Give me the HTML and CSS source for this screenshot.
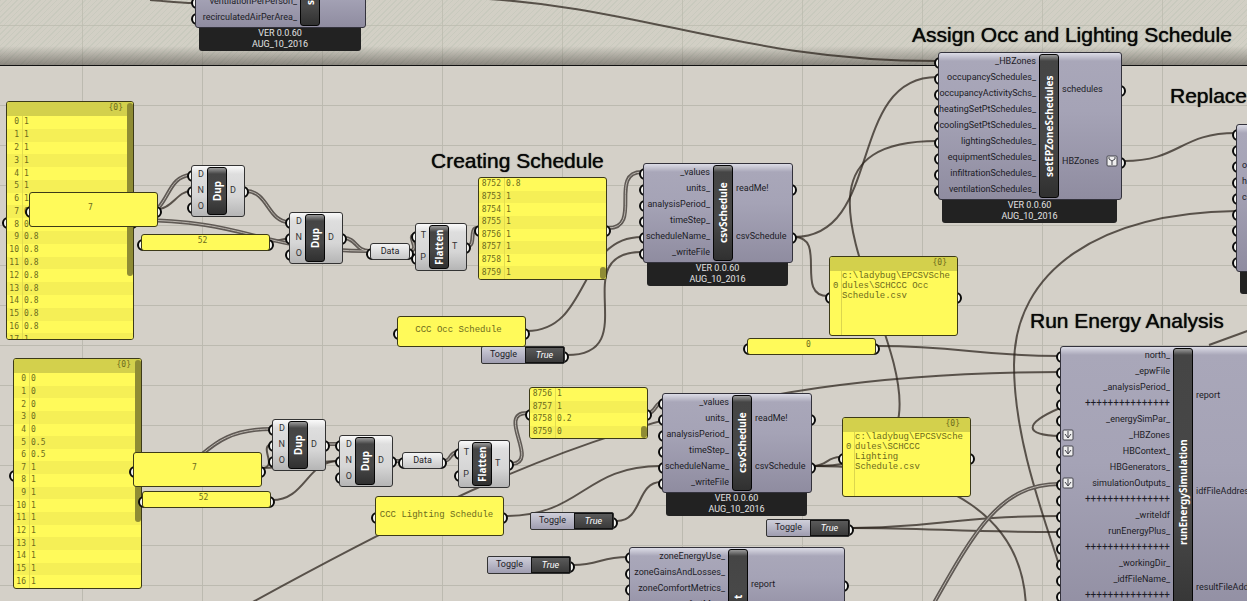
FILE: index.html
```html
<!DOCTYPE html>
<html lang="en">
<head>
<meta charset="utf-8">
<title>Schedule definition</title>
<link rel="stylesheet" href="styles.css">
</head>
<body>
<main class="canvas">
  <div class="group-area"></div>

  <svg class="wires" aria-hidden="true">
    <defs>
      <g id="double-wires">
        <path d="M159 207C170 194 172 176 191 175"/>
        <path d="M246 191C268 191 268 222 289 222"/>
        <path d="M134 220C250 220 260 251 369 251"/>
        <path d="M344 238C356 238 356 251 369 251"/>
        <path d="M411 251C420 248 406 236 415 235"/>
        <path d="M468 246C476 246 469 228 477 228"/>
        <path d="M608 228C643 228 608 172 642 172"/>
        <path d="M160 473C205 473 200 429 272 429"/>
        <path d="M327 444L339 444"/>
        <path d="M395 461L402 461"/>
        <path d="M443 461C452 461 448 454 457 452"/>
        <path d="M512 464C540 462 496 413 527 413"/>
        <path d="M649 413C655 412 656 403 662 402"/>
        <path d="M930 610C975 530 1000 484 1060 484"/>
      </g>
    </defs>
    <g class="single">
      <path d="M150 0C165 1 178 3 194 3"/>
      <path d="M470 -2C640 5 740 61 937 61"/>
      <path d="M159 209C172 208 178 191 191 191"/>
      <path d="M271 242L289 238"/>
      <path d="M527 331C591 331 577 237 642 237"/>
      <path d="M567 355C646 355 564 252 642 252"/>
      <path d="M794 237C884 237 846 77 937 77"/>
      <path d="M794 237C828 237 794 296 828 296"/>
      <path d="M813 466C1050 466 699 141 937 141"/>
      <path d="M813 466C827 466 827 457 840 457"/>
      <path d="M813 466C950 466 1025 520 1026 610"/>
      <path d="M878 346C960 346 978 356 1060 356"/>
      <path d="M240 609C520 455 700 373 1060 372"/>
      <path d="M1236 211C1100 213 1014 270 1014 365C1014 440 1045 520 1060 568"/>
      <path d="M1060 436C1024 435 1023 424 1060 408"/>
      <path d="M852 528C930 528 960 516 1060 516"/>
      <path d="M852 528C930 528 960 532 1060 532"/>
      <path d="M1209 345L1250 330"/>
      <path d="M1124 161C1180 161 1180 133 1236 133"/>
      <path d="M263 468C278 466 258 446 272 444"/>
      <path d="M263 468C290 468 310 461 339 461"/>
      <path d="M272 500C306 500 306 461 339 461"/>
      <path d="M505 516C583 516 583 466 661 466"/>
      <path d="M617 521C643 521 636 482 661 482"/>
      <path d="M573 565C600 565 600 557 628 557"/>
    </g>
    <use class="wire-edge" href="#double-wires"/>
    <use class="wire-core" href="#double-wires"/>
  </svg>

  <h2 class="caption cap-assign">Assign Occ and Lighting Schedule</h2>
  <h2 class="caption cap-replace">Replace</h2>
  <h2 class="caption cap-create">Creating Schedule</h2>
  <h2 class="caption cap-run">Run Energy Analysis</h2>

  <section class="node n-loads">
    <div class="body">
      <ul class="inputs"><li></li><li>ventilationPerPerson_</li><li>recirculatedAirPerArea_</li></ul>
      <h3 class="title title-start">s</h3>
      <ul class="outputs"></ul>
    </div>
    <footer class="strip">VER 0.0.60<br>AUG_10_2016</footer>
  </section>

  <section class="node n-setep">
    <div class="body">
      <ul class="inputs"><li>_HBZones</li><li>occupancySchedules_</li><li>occupancyActivitySchs_</li><li>heatingSetPtSchedules_</li><li>coolingSetPtSchedules_</li><li>lightingSchedules_</li><li>equipmentSchedules_</li><li>infiltrationSchedules_</li><li>ventilationSchedules_</li></ul>
      <h3 class="title">setEPZoneSchedules</h3>
      <ul class="outputs"><li>schedules</li><li>HBZones <svg class="badge" viewBox="0 0 12 12"><rect x="1" y="1" width="10" height="10" rx="1"/><path d="M3 2v2l3 2 3-2V2M6 6v4"/></svg></li></ul>
    </div>
    <footer class="strip">VER 0.0.60<br>AUG_10_2016</footer>
  </section>

  <section class="node n-replace">
    <div class="body">
      <ul class="inputs"><li></li><li></li><li>occupancy_</li><li>heating_</li><li>cooling_</li><li></li><li></li><li></li><li></li></ul>
    </div>
    <footer class="strip"></footer>
  </section>

  <section class="node n-csv1">
    <div class="body">
      <ul class="inputs"><li>_values</li><li>units_</li><li>analysisPeriod_</li><li>timeStep_</li><li>scheduleName_</li><li>_writeFile</li></ul>
      <h3 class="title">csvSchedule</h3>
      <ul class="outputs"><li>readMe!</li><li>csvSchedule</li></ul>
    </div>
    <footer class="strip">VER 0.0.60<br>AUG_10_2016</footer>
  </section>

  <section class="node n-csv2">
    <div class="body">
      <ul class="inputs"><li>_values</li><li>units_</li><li>analysisPeriod_</li><li>timeStep_</li><li>scheduleName_</li><li>_writeFile</li></ul>
      <h3 class="title">csvSchedule</h3>
      <ul class="outputs"><li>readMe!</li><li>csvSchedule</li></ul>
    </div>
    <footer class="strip">VER 0.0.60<br>AUG_10_2016</footer>
  </section>

  <section class="node n-zone">
    <div class="body">
      <ul class="inputs"><li>zoneEnergyUse_</li><li>zoneGainsAndLosses_</li><li>zoneComfortMetrics_</li><li>comfortMap_</li></ul>
      <h3 class="title title-start">t</h3>
      <ul class="outputs"><li>report</li></ul>
    </div>
  </section>

  <section class="node n-run">
    <div class="body">
      <ul class="inputs">
        <li>north_</li><li>_epwFile</li><li>_analysisPeriod_</li><li class="rule">+++++++++++++++</li><li>_energySimPar_</li>
        <li><svg class="badge" viewBox="0 0 12 12"><rect x="1" y="1" width="10" height="10" rx="1"/><path d="M6 2v7M3 5l3 4 3-4"/></svg>_HBZones</li>
        <li><svg class="badge" viewBox="0 0 12 12"><rect x="1" y="1" width="10" height="10" rx="1"/><path d="M6 2v7M3 5l3 4 3-4"/></svg>HBContext_</li>
        <li>HBGenerators_</li>
        <li><svg class="badge" viewBox="0 0 12 12"><rect x="1" y="1" width="10" height="10" rx="1"/><path d="M6 2v7M3 5l3 4 3-4"/></svg>simulationOutputs_</li>
        <li class="rule">+++++++++++++++</li><li>_writeIdf</li><li>runEnergyPlus_</li><li class="rule">+++++++++++++++</li><li>_workingDir_</li><li>_idfFileName_</li><li class="rule">+++++++++++++++</li>
      </ul>
      <h3 class="title">runEnergySimulation</h3>
      <ul class="outputs"><li>report</li><li>idfFileAddress</li><li>resultFileAddress</li></ul>
    </div>
  </section>

  <section class="node light n-dup1"><div class="body"><ul class="inputs"><li>D</li><li>N</li><li>O</li></ul><h3 class="title">Dup</h3><ul class="outputs"><li>D</li></ul></div></section>
  <section class="node light n-dup2"><div class="body"><ul class="inputs"><li>D</li><li>N</li><li>O</li></ul><h3 class="title">Dup</h3><ul class="outputs"><li>D</li></ul></div></section>
  <section class="node light n-dup3"><div class="body"><ul class="inputs"><li>D</li><li>N</li><li>O</li></ul><h3 class="title">Dup</h3><ul class="outputs"><li>D</li></ul></div></section>
  <section class="node light n-dup4"><div class="body"><ul class="inputs"><li>D</li><li>N</li><li>O</li></ul><h3 class="title">Dup</h3><ul class="outputs"><li>D</li></ul></div></section>
  <section class="node light flatten n-flat1"><div class="body"><ul class="inputs"><li>T</li><li>P</li></ul><h3 class="title">Flatten</h3><ul class="outputs"><li>T</li></ul></div></section>
  <section class="node light flatten n-flat2"><div class="body"><ul class="inputs"><li>T</li><li>P</li></ul><h3 class="title">Flatten</h3><ul class="outputs"><li>T</li></ul></div></section>

  <div class="node ported n-data1"><div class="data">Data</div></div>
  <div class="node ported n-data2"><div class="data">Data</div></div>

  <section class="node ported n-list1">
    <div class="panel">
      <header class="path">{0}</header>
      <ol class="values list-18">
        <li><b>0</b>1</li><li><b>1</b>1</li><li><b>2</b>1</li><li><b>3</b>1</li><li><b>4</b>1</li><li><b>5</b>1</li><li><b>6</b>1</li><li><b>7</b>0</li><li><b>8</b>0.8</li><li><b>9</b>0.8</li><li><b>10</b>0.8</li><li><b>11</b>0.8</li><li><b>12</b>0.8</li><li><b>13</b>0.8</li><li><b>14</b>0.8</li><li><b>15</b>0.8</li><li><b>16</b>0.8</li><li><b>17</b>1</li>
      </ol>
      <span class="scroll"></span>
    </div>
  </section>

  <section class="node ported n-list2">
    <div class="panel">
      <header class="path">{0}</header>
      <ol class="values">
        <li><b>0</b>0</li><li><b>1</b>0</li><li><b>2</b>0</li><li><b>3</b>0</li><li><b>4</b>0</li><li><b>5</b>0.5</li><li><b>6</b>0.5</li><li><b>7</b>1</li><li><b>8</b>1</li><li><b>9</b>1</li><li><b>10</b>1</li><li><b>11</b>1</li><li><b>12</b>1</li><li><b>13</b>1</li><li><b>14</b>1</li><li><b>15</b>1</li><li><b>16</b>1</li>
      </ol>
      <span class="scroll"></span>
    </div>
  </section>

  <section class="node ported tail n-list3">
    <div class="panel">
      <ol class="values wide"><li><b>8752</b>0.8</li><li><b>8753</b>1</li><li><b>8754</b>1</li><li><b>8755</b>1</li><li><b>8756</b>1</li><li><b>8757</b>1</li><li><b>8758</b>1</li><li><b>8759</b>1</li></ol>
      <span class="scroll"></span>
    </div>
  </section>

  <section class="node ported tail n-list4">
    <div class="panel">
      <ol class="values wide"><li><b>8756</b>1</li><li><b>8757</b>1</li><li><b>8758</b>0.2</li><li><b>8759</b>0</li></ol>
      <span class="scroll"></span>
    </div>
  </section>

  <section class="node ported n-file1">
    <div class="panel">
      <header class="path">{0}</header>
      <div class="file"><b>0</b><p>c:\ladybug\EPCSVSche<br>dules\SCHCCC Occ<br>Schedule.csv</p></div>
    </div>
  </section>
  <section class="node ported n-file2">
    <div class="panel">
      <header class="path">{0}</header>
      <div class="file"><b>0</b><p>c:\ladybug\EPCSVSche<br>dules\SCHCCC<br>Lighting<br>Schedule.csv</p></div>
    </div>
  </section>

  <div class="node ported n-seven1"><div class="panel note number">7</div></div>
  <div class="node ported n-seven2"><div class="panel note number">7</div></div>
  <div class="node ported n-weeks1"><div class="panel note number">52</div></div>
  <div class="node ported n-weeks2"><div class="panel note number">52</div></div>
  <div class="node ported n-north"><div class="panel note number">0</div></div>
  <div class="node ported out-only n-toggle1"><div class="toggle"><span id="t1">Toggle</span><button type="button" aria-describedby="t1">True</button></div></div>
  <div class="node ported n-occ"><div class="panel note">CCC Occ Schedule</div></div>
  <div class="node ported n-light"><div class="panel note">CCC Lighting Schedule</div></div>
  <div class="node ported out-only n-toggle2"><div class="toggle"><span id="t2">Toggle</span><button type="button" aria-describedby="t2">True</button></div></div>
  <div class="node ported out-only n-toggle3"><div class="toggle"><span id="t3">Toggle</span><button type="button" aria-describedby="t3">True</button></div></div>
  <div class="node ported out-only n-toggle4"><div class="toggle"><span id="t4">Toggle</span><button type="button" aria-describedby="t4">True</button></div></div>
</main>
</body>
</html>
```
FILE: styles.css
```css
* { box-sizing: border-box; }
body { margin: 0; font-family: Roboto, "Open Sans", sans-serif; font-size: 9px; color: #1c1c26; }
ul, ol, h2, h3, p { margin: 0; padding: 0; list-style: none; }

.canvas {
  position: relative;
  min-height: 100vh;
  overflow: hidden;
  isolation: isolate;
  background-color: #d4d0c8;
  background-image:
    linear-gradient(90deg, #bcbab0 1px, transparent 1px),
    linear-gradient(#bcbab0 1px, transparent 1px);
  background-size: 120px 120px, 40px 40px;
  background-position: 82px 0, 0 25px;
}
.canvas, .wires { width: 100%; }

.group-area {
  height: 66px;
  border-bottom: 1px solid #111;
  background:
    linear-gradient(transparent 46px, rgba(60, 55, 50, .5) 66px),
    repeating-linear-gradient(135deg, rgba(190, 196, 180, .5) 0 1px, rgba(206, 206, 190, .3) 1px 4px);
}

.wires { position: absolute; left: 0; top: 0; height: 100%; fill: none; }
.single { stroke: #282019; stroke-opacity: .72; stroke-width: 2; }
.wire-edge { stroke: #5f5954; stroke-width: 4; }
.wire-core { stroke: #b9b4ad; stroke-width: 1; }

.caption {
  position: absolute;
  font: 400 21px/24px "Liberation Sans", sans-serif;
  color: #080808;
  text-shadow: 0 0 1px #080808;
  white-space: nowrap;
}
.cap-assign { left: 912px; top: 23px; }
.cap-replace { left: 1170px; top: 84px; }
.cap-create { left: 431px; top: 149px; }
.cap-run { left: 1030px; top: 309px; }

/* Components */
.node { position: absolute; isolation: isolate; }
.body {
  display: grid;
  grid-template-columns: var(--in) 20px 1fr;
  padding-bottom: 2px;
  border: 1px solid #33323c;
  border-radius: 3px;
  background: linear-gradient(#dcdce6, #a9a7b9 8px, #a5a3b6 40%, #8f8ca0);
  line-height: 16px;
}
.inputs, .outputs { display: flex; flex-direction: column; white-space: nowrap; }
.inputs li { position: relative; height: 16px; padding-right: 3px; text-align: right; }
.inputs .rule { font-size: 10px; }
.outputs li { position: relative; flex: 1; display: flex; align-items: center; justify-content: space-between; padding: 0 3px; }
.inputs li::before, .outputs li::after, .ported::before, .ported::after {
  content: "";
  position: absolute;
  z-index: -1;
  top: calc(50% - 4px);
  width: 8px;
  height: 8px;
  border: 2px solid #080808;
  border-radius: 50%;
  background: #f4f4f0;
}
.inputs li::before { left: -5px; }
.outputs li::after { right: -5px; }
.ported::before { left: -4px; }
.ported::after { right: -4px; }
.out-only::before { display: none; }

.title {
  display: flex;
  align-items: center;
  justify-content: center;
  margin: 1px 0 -1px;
  border: 1px solid #050505;
  border-radius: 3px;
  background: linear-gradient(0deg, #9a9a9a, #454545 6px, #484848 60%, #303030);
  color: #fff;
  font: 700 10px/12px "Noto Sans", sans-serif;
  writing-mode: vertical-rl;
  transform: rotate(180deg);
}
.strip {
  min-height: 22px;
  margin: 0 5px 0 4px;
  padding-bottom: 1px;
  border-radius: 0 0 3px 3px;
  background: #222;
  color: #e2e2e2;
  line-height: 11px;
  text-align: center;
}
.badge { flex: none; width: 12px; height: 12px; fill: #eee; stroke: #44444c; stroke-width: 1; }
.inputs .badge { position: absolute; left: 1px; top: 2px; }

.light .body { border-color: #333; background: linear-gradient(#fafafa, #dedede 8px, #d6d6d6 60%, #b5b5b5); color: #333; }
.light { --in: 15px; width: 54px; }
.flatten { --in: 13px; width: 52px; }
.flatten .inputs li { height: 22px; line-height: 22px; }

.n-loads { --in: 104px; left: 195px; top: -24px; width: 171px; }
.n-loads .title { padding-top: 20px; }
.title-start { justify-content: flex-start; }
.n-setep { --in: 100px; left: 938px; top: 52px; width: 184px; }
.n-replace { --in: 100px; left: 1236px; top: 124px; width: 180px; }
.n-replace .inputs li { padding-left: 5px; text-align: left; }
.n-csv1 { --in: 69px; left: 643px; top: 163px; width: 150px; }
.n-csv2 { --in: 69px; left: 662px; top: 393px; width: 150px; }
.n-zone { --in: 98px; left: 629px; top: 547px; width: 216px; }
.n-zone .outputs li { flex: none; height: 71px; }
.n-zone .title { padding-top: 20px; }
.n-run { --in: 112px; left: 1060px; top: 346px; width: 215px; }
.n-run .title { min-height: 288px; }

.n-dup1 { left: 191px; top: 165px; }
.n-dup2 { left: 289px; top: 212px; }
.n-dup3 { left: 272px; top: 419px; }
.n-dup4 { left: 339px; top: 435px; }
.n-flat1 { left: 415px; top: 223px; }
.n-flat2 { left: 458px; top: 440px; }

.data {
  border: 1px solid #333;
  border-radius: 3px;
  background: linear-gradient(#f4f4f4, #c8c8c8);
  line-height: 15px;
  text-align: center;
}
.n-data1 { left: 370px; top: 243px; width: 40px; }
.n-data2 { left: 402px; top: 452px; width: 41px; }

/* Text panels */
.panel {
  position: relative;
  display: flex;
  flex-direction: column;
  height: 100%;
  overflow: hidden;
  border: 1px solid #3c3a18;
  border-radius: 3px;
  background: #fffa5a;
  color: #6c6a1c;
  font: 8px/12px "DejaVu Sans Mono", monospace;
}
.path { flex: none; height: 14px; padding-right: 10px; background: #d3d04c; text-align: right; }
.values { flex: 1; display: flex; flex-direction: column; }
.values li { flex: 1; display: flex; align-items: center; }
.values li:nth-child(even) { background: #f5ef56; }
.list-18 { flex: none; height: 230px; }
b { font-weight: 400; }
.values b {
  display: flex;
  align-items: center;
  align-self: stretch;
  justify-content: flex-end;
  width: 16px;
  margin-right: 1px;
  padding-right: 3px;
  border-right: 1px solid #e2dc50;
}
.values.wide b { width: 26px; }
.scroll { position: absolute; right: 0; top: 1px; width: 6px; border-radius: 3px; background: #8f8c34; }
.tail .scroll { top: auto; bottom: 0; height: 12px; }
.file { flex: 1; display: flex; font: 9px/10px "Liberation Mono", monospace; }
.file b { width: 12px; padding: 10px 3px 0; border-right: 1px solid #dcd64e; }
.file p { white-space: nowrap; }
.note { align-items: center; justify-content: center; padding: 0 6px 3px 0; font: 9px/12px "Liberation Mono", monospace; }
.number { font: 8px/12px "DejaVu Sans Mono", monospace; }

.n-list1 { left: 6px; top: 101px; width: 128px; height: 239px; }
.n-list1 .scroll { height: 173px; }
.n-list2 { left: 13px; top: 358px; width: 129px; height: 231px; }
.n-list2 .scroll { height: 162px; }
.n-list3 { left: 478px; top: 177px; width: 129px; height: 103px; }
.n-list4 { left: 529px; top: 387px; width: 119px; height: 52px; }
.n-file1 { left: 829px; top: 256px; width: 129px; height: 80px; }
.n-file2 { left: 842px; top: 417px; width: 129px; height: 80px; }
.n-seven1 { left: 29px; top: 192px; width: 129px; height: 35px; }
.n-seven2 { left: 133px; top: 452px; width: 129px; height: 35px; }
.n-weeks1 { left: 141px; top: 234px; width: 129px; height: 17px; }
.n-weeks2 { left: 142px; top: 491px; width: 129px; height: 17px; }
.n-north { left: 747px; top: 338px; width: 129px; height: 17px; }
.n-occ { left: 397px; top: 316px; width: 129px; height: 31px; }
.n-light { left: 375px; top: 496px; width: 129px; height: 40px; }

.toggle {
  display: grid;
  grid-template-columns: 1fr 39px;
  height: 18px;
  border: 1px solid #333;
  border-radius: 2px;
  background: linear-gradient(#cfcfda, #9f9db0);
  line-height: 15px;
  text-align: center;
}
.toggle button {
  margin: 0;
  padding: 0;
  border: 1px solid #111;
  background: linear-gradient(#5a5a5a, #3a3a3a);
  color: #fff;
  font: italic 9px/12px Roboto, sans-serif;
}
.n-toggle1 { left: 481px; top: 346px; width: 84px; }
.n-toggle2 { left: 530px; top: 512px; width: 84px; }
.n-toggle3 { left: 487px; top: 556px; width: 84px; }
.n-toggle4 { left: 766px; top: 519px; width: 84px; }
```
